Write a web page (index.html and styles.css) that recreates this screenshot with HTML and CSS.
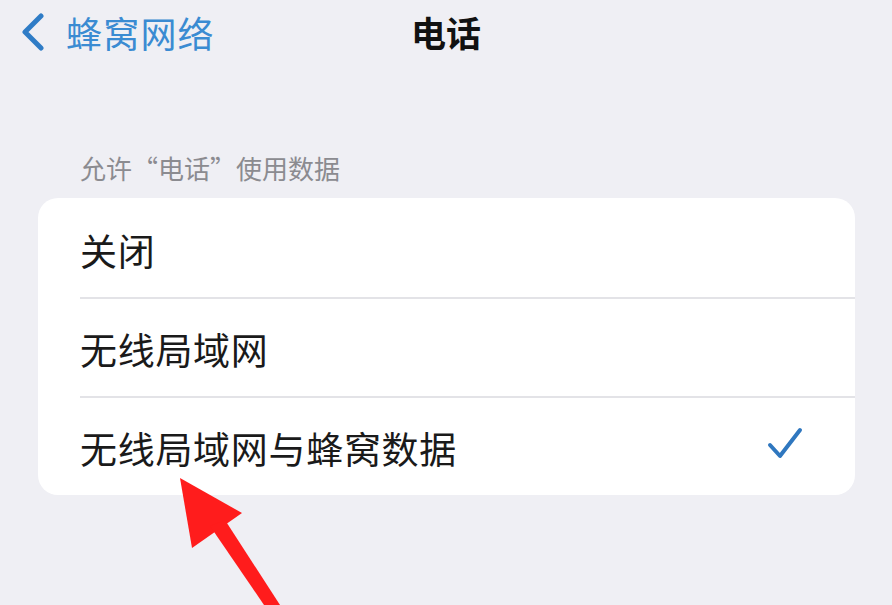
FILE: index.html
```html
<!DOCTYPE html>
<html lang="zh">
<head>
<meta charset="utf-8">
<link rel="stylesheet" href="styles.css">
</head>
<body>
<div class="screen">
  <header class="nav">
    <div class="back">
      <svg class="chev" width="26" height="38" viewBox="0 0 26 38"><path d="M21 3 L5 19 L21 35" fill="none" stroke="#2f7cc6" stroke-width="5" stroke-linecap="round" stroke-linejoin="round"/></svg>
      <span class="back-label">蜂窝网络</span>
    </div>
    <div class="title">电话</div>
  </header>
  <div class="section-label">允许“电话”使用数据</div>
  <div class="card">
    <div class="row"><span class="row-text">关闭</span></div>
    <div class="row"><span class="row-text">无线局域网</span></div>
    <div class="row"><span class="row-text">无线局域网与蜂窝数据</span>
      <svg class="check" width="36" height="34" viewBox="0 0 36 34"><path d="M3 19 L13 30 L33 4" fill="none" stroke="#2f77bf" stroke-width="4" stroke-linecap="round" stroke-linejoin="round"/></svg>
    </div>
  </div>
  <svg class="arrow" width="892" height="605" viewBox="0 0 892 605">
    <polygon points="180,478 242,513 192,548" fill="#ff1c1c"/>
    <polygon points="210,526 225,520 280,605 264,605" fill="#ff1c1c"/>
  </svg>
</div>
</body>
</html>
```
FILE: styles.css
```css
html, body {
  margin: 0;
  padding: 0;
}
body {
  background: #efeff4;
  font-family: "Noto Sans CJK SC", "Noto Sans", sans-serif;
  width: 892px;
  height: 605px;
  overflow: hidden;
}
.screen {
  position: relative;
  width: 892px;
  height: 605px;
}
.nav {
  position: relative;
  height: 66px;
  display: flex;
  align-items: center;
  justify-content: center;
}
.back {
  position: absolute;
  left: 20px;
  top: 12px;
  display: flex;
  align-items: center;
  gap: 20px;
}
.back-label {
  font-size: 36px;
  color: #3a8bd2;
  line-height: 40px;
  letter-spacing: 1.2px;
}
.title {
  font-size: 35px;
  font-weight: 700;
  color: #111;
  line-height: 40px;
  margin-top: -2px;
}
.section-label {
  margin: 86px 0 0 80px;
  font-size: 26px;
  line-height: 32px;
  color: #8b8b90;
}
.card {
  margin: 14px 37px 0 38px;
  background: #fff;
  border-radius: 20px;
  overflow: hidden;
}
.row {
  height: 99px;
  display: flex;
  align-items: center;
  justify-content: space-between;
  padding: 0 52px 0 42px;
  position: relative;
}
.row + .row::before {
  content: "";
  position: absolute;
  left: 42px;
  right: 0;
  top: 0;
  height: 2px;
  background: #e3e3e7;
}
.row-text {
  font-size: 37px;
  color: #1a1a1a;
  line-height: 44px;
  margin-top: 4px;
  letter-spacing: 0.7px;
}
.check {
  margin-top: -6px;
}
.arrow {
  position: absolute;
  left: 0;
  top: 0;
  pointer-events: none;
}
```
